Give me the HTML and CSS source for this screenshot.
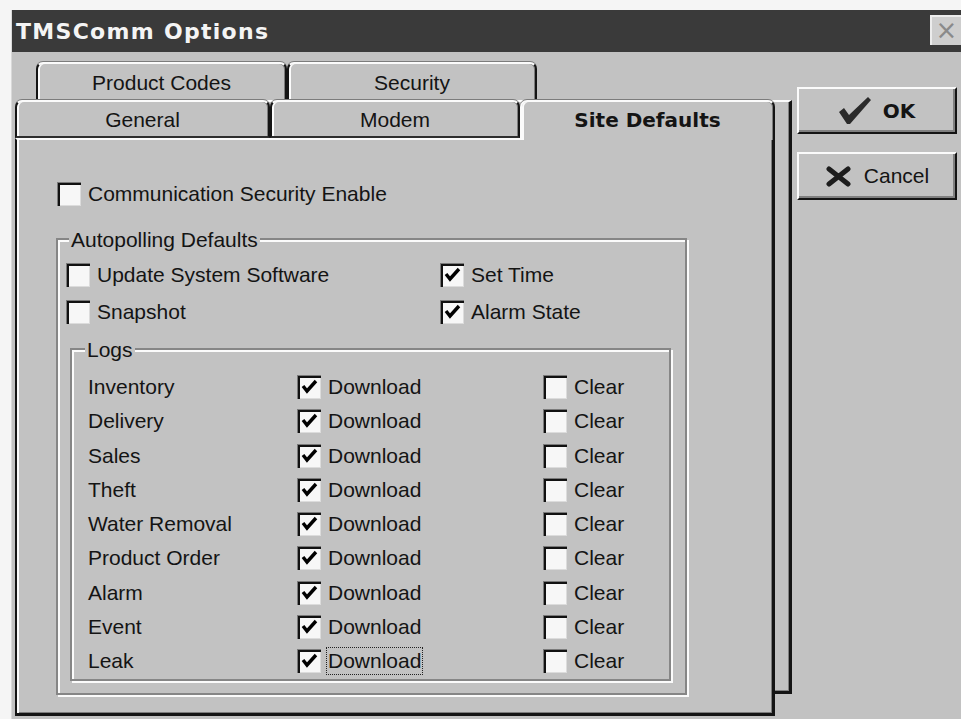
FILE: index.html
```html
<!DOCTYPE html>
<html>
<head>
<meta charset="utf-8">
<title>TMSComm Options</title>
<link rel="stylesheet" href="styles.css">
</head>
<body>
<div class="window">
  <div class="titlebar">
    <span class="title">TMSComm Options</span>
    <span class="close">×</span>
  </div>
  <div class="client">
    <div class="sheet">
      <div class="tabrow back">
        <div class="tab w251">Product Codes</div>
        <div class="tab w250">Security</div>
      </div>
      <div class="page-back"></div>
      <div class="tabrow front">
        <div class="tab w255">General</div>
        <div class="tab w250">Modem</div>
        <div class="tab w255 active">Site Defaults</div>
      </div>
      <div class="page">
        <div class="page-body">
          <label class="cb"><span class="box"></span><span>Communication Security Enable</span></label>

          <div class="group outer">
            <span class="legend">Autopolling Defaults</span>
            <div class="opts">
              <label class="cb"><span class="box"></span><span>Update System Software</span></label>
              <label class="cb"><span class="box"><svg viewBox="0 0 24 24"><path d="M6 11 L10 16 L19 6" /></svg></span><span>Set Time</span></label>
              <label class="cb"><span class="box"></span><span>Snapshot</span></label>
              <label class="cb"><span class="box"><svg viewBox="0 0 24 24"><path d="M6 11 L10 16 L19 6" /></svg></span><span>Alarm State</span></label>
            </div>

            <div class="group logs">
              <span class="legend">Logs</span>
              <div class="log-grid">
                <span class="name">Inventory</span>
                <label class="cb"><span class="box"><svg viewBox="0 0 24 24"><path d="M6 11 L10 16 L19 6" /></svg></span><span>Download</span></label>
                <label class="cb"><span class="box"></span><span>Clear</span></label>

                <span class="name">Delivery</span>
                <label class="cb"><span class="box"><svg viewBox="0 0 24 24"><path d="M6 11 L10 16 L19 6" /></svg></span><span>Download</span></label>
                <label class="cb"><span class="box"></span><span>Clear</span></label>

                <span class="name">Sales</span>
                <label class="cb"><span class="box"><svg viewBox="0 0 24 24"><path d="M6 11 L10 16 L19 6" /></svg></span><span>Download</span></label>
                <label class="cb"><span class="box"></span><span>Clear</span></label>

                <span class="name">Theft</span>
                <label class="cb"><span class="box"><svg viewBox="0 0 24 24"><path d="M6 11 L10 16 L19 6" /></svg></span><span>Download</span></label>
                <label class="cb"><span class="box"></span><span>Clear</span></label>

                <span class="name">Water Removal</span>
                <label class="cb"><span class="box"><svg viewBox="0 0 24 24"><path d="M6 11 L10 16 L19 6" /></svg></span><span>Download</span></label>
                <label class="cb"><span class="box"></span><span>Clear</span></label>

                <span class="name">Product Order</span>
                <label class="cb"><span class="box"><svg viewBox="0 0 24 24"><path d="M6 11 L10 16 L19 6" /></svg></span><span>Download</span></label>
                <label class="cb"><span class="box"></span><span>Clear</span></label>

                <span class="name">Alarm</span>
                <label class="cb"><span class="box"><svg viewBox="0 0 24 24"><path d="M6 11 L10 16 L19 6" /></svg></span><span>Download</span></label>
                <label class="cb"><span class="box"></span><span>Clear</span></label>

                <span class="name">Event</span>
                <label class="cb"><span class="box"><svg viewBox="0 0 24 24"><path d="M6 11 L10 16 L19 6" /></svg></span><span>Download</span></label>
                <label class="cb"><span class="box"></span><span>Clear</span></label>

                <span class="name">Leak</span>
                <label class="cb"><span class="box"><svg viewBox="0 0 24 24"><path d="M6 11 L10 16 L19 6" /></svg></span><span class="focus">Download</span></label>
                <label class="cb"><span class="box"></span><span>Clear</span></label>
              </div>
            </div>
          </div>
        </div>
      </div>
    </div>

    <div class="buttons">
      <div class="btn">
        <svg class="ico-ok" width="32" height="27" viewBox="0 0 32 27"><path d="M0 15 L5 11 L10 18 L29 0 L32 3 L11 27 L8 27 Z"/></svg>
        <span class="btn-bold">OK</span>
      </div>
      <div class="btn">
        <svg class="ico-x" width="27" height="21" viewBox="0 0 27 21"><path d="M4 3 L23 18 M23 3 L4 18"/></svg>
        <span>Cancel</span>
      </div>
    </div>
  </div>
</div>
</body>
</html>
```

FILE: styles.css
```css
* { box-sizing: border-box; }

html, body {
  margin: 0;
  padding: 0;
}

body {
  width: 961px;
  height: 719px;
  overflow: hidden;
  background: #f5f5f5;
  font-family: "Liberation Sans", Arial, sans-serif;
  font-size: 21px;
  color: #141414;
}

/* dialog frame */
.window {
  margin: 10px 0 0 11px;
  width: 950px;
  height: 709px;
  background: #c2c2c2;
  border-left: 1px solid #d9d9d9;
  display: flex;
  flex-direction: column;
}

.titlebar {
  height: 42px;
  flex: none;
  background: #3a3a3a;
  display: flex;
  justify-content: space-between;
  padding-left: 4px;
}

.title {
  align-self: center;
  font-family: "DejaVu Sans", sans-serif;
  font-weight: bold;
  font-size: 22px;
  letter-spacing: 1.3px;
  color: #f4f4f4;
}

.close {
  margin-top: 5px;
  width: 31px;
  height: 30px;
  background: #cecece;
  border-top: 2px solid #ececec;
  border-left: 2px solid #ececec;
  color: #8a8a8a;
  font-family: "DejaVu Sans", sans-serif;
  font-size: 26px;
  line-height: 26px;
  text-align: center;
}

.client {
  flex: 1;
  display: flex;
}

/* tabbed sheet */
.sheet {
  position: relative;
  width: 777px;
  margin-left: 3px;
  padding-top: 10px;
}

.tabrow {
  display: flex;
  height: 38px;
}

.tabrow.back { margin-left: 21px; }

.tabrow.front {
  position: relative;
  z-index: 2;
}

.w250 { width: 250px; }
.w251 { width: 251px; }
.w255 { width: 255px; }

.tab {
  height: 100%;
  background: #c2c2c2;
  border: 2px solid #141414;
  border-top-color: #fbfbfb;
  border-bottom: none;
  border-radius: 7px 7px 0 0;
  box-shadow: inset 2px 0 0 #fbfbfb, inset -1px 0 0 #7c7c7c, 0 -1px 0 #7c7c7c;
  display: flex;
  align-items: center;
  justify-content: center;
  padding-top: 1px;
}

.tabrow.front .tab {
  border-bottom: 2px solid #2e2e2e;
}

.tabrow.front .tab.active {
  height: 40px;
  margin-bottom: -2px;
  border-bottom: none;
  border-left-color: #fbfbfb;
  font-family: "DejaVu Sans", sans-serif;
  font-weight: bold;
  font-size: 20px;
  padding-top: 0;
  padding-bottom: 2px;
}

/* edge of the page lying behind the front row */
.page-back {
  position: absolute;
  z-index: 0;
  top: 48px;
  left: 60px;
  right: 0;
  height: 594px;
  border-top: 2px solid #fbfbfb;
  border-right: 3px solid #141414;
  border-bottom: 3px solid #141414;
  box-shadow: inset -1px -1px 0 #808080;
}

.page {
  position: relative;
  z-index: 1;
  width: 760px;
  height: 578px;
  background: #c2c2c2;
  border-left: 2px solid #141414;
  border-top: 2px solid #fbfbfb;
  border-right: 3px solid #141414;
  border-bottom: 3px solid #141414;
  box-shadow: inset 2px 0 0 #fbfbfb, inset -1px -1px 0 #7c7c7c;
}

.page-body {
  padding: 42px 0 0 40px;
}

/* checkboxes */
.cb {
  display: flex;
  align-items: center;
  gap: 7px;
  height: 24px;
  white-space: nowrap;
}

.box {
  flex: none;
  width: 24px;
  height: 24px;
  background: #f7f7f7;
  box-shadow: inset 1px 1px 0 #7a7a7a, inset 3px 3px 0 #111, inset -1px -1px 0 #dcdcdc;
}

.box svg {
  display: block;
  width: 24px;
  height: 24px;
}

.box path {
  fill: none;
  stroke: #000;
  stroke-width: 3.4;
}

/* etched group boxes */
.group {
  position: relative;
  border: 2px solid #868686;
  box-shadow: inset 2px 2px 0 #fbfbfb, 2px 2px 0 #fbfbfb;
}

.legend {
  position: absolute;
  top: -12px;
  left: 11px;
  padding: 0 2px;
  line-height: 24px;
  background: #c2c2c2;
}

.group.outer {
  margin: 32px 0 0 -1px;
  width: 631px;
  height: 457px;
  padding: 23px 0 0 8px;
}

.opts {
  display: grid;
  grid-template-columns: 374px auto;
  row-gap: 13px;
}

.group.logs {
  margin: 24px 0 0 4px;
  width: 601px;
  height: 333px;
  padding: 20px 0 0 16px;
}

.group.logs .legend { left: 13px; }

.log-grid {
  display: grid;
  grid-template-columns: 209px 246px auto;
  grid-auto-rows: 34.25px;
  align-items: center;
}

.name {
  line-height: 24px;
}

.focus {
  outline: 1px dotted #222;
  outline-offset: 1px;
}

/* command buttons */
.buttons {
  margin-left: 5px;
  padding-top: 35px;
  display: flex;
  flex-direction: column;
  gap: 18px;
}

.btn {
  width: 160px;
  height: 47px;
  background: #c2c2c2;
  border: 2px solid;
  border-color: #fbfbfb #141414 #141414 #fbfbfb;
  box-shadow: inset -2px -2px 0 #808080;
  display: flex;
  align-items: center;
  justify-content: center;
  gap: 12px;
}

.btn + .btn { height: 48px; }

.btn-bold {
  font-family: "DejaVu Sans", sans-serif;
  font-weight: bold;
  font-size: 20px;
}

.ico-ok path { fill: #2a2a2a; }

.ico-x path {
  fill: none;
  stroke: #1c1c1c;
  stroke-width: 5;
  stroke-linecap: round;
}
```
